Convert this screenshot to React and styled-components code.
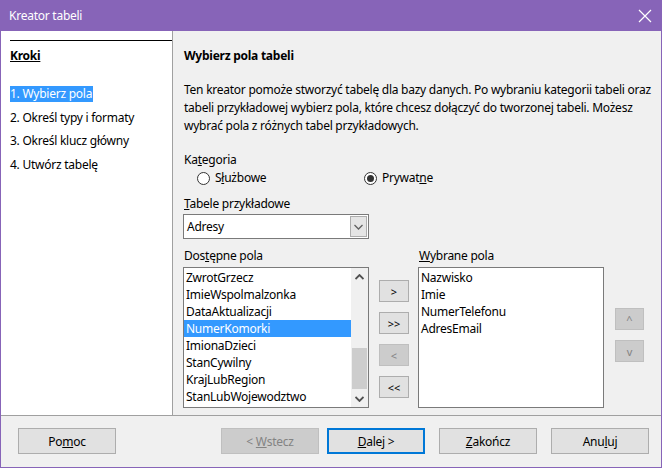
import styled, { createGlobalStyle } from "styled-components";

const GlobalStyle = createGlobalStyle`
    html, body {
        margin: 0;
        padding: 0;
        background: #ffffff;
    }
    * {
        box-sizing: border-box;
    }
`

const available = [
    "ZwrotGrzecz",
    "ImieWspolmalzonka",
    "DataAktualizacji",
    "NumerKomorki",
    "ImionaDzieci",
    "StanCywilny",
    "KrajLubRegion",
    "StanLubWojewodztwo",
];

const chosen = ["Nazwisko", "Imie", "NumerTelefonu", "AdresEmail"];

const steps = [
    "1. Wybierz pola",
    "2. Określ typy i formaty",
    "3. Określ klucz główny",
    "4. Utwórz tabelę",
];

function Chevron({ up, color = "#606060", weight = 1.3 }) {
    return (
        <svg width="9" height="6" viewBox="0 0 9 6">
            <path
                d={up ? "M0.5 5 L4.5 1 L8.5 5" : "M0.5 1 L4.5 5 L8.5 1"}
                fill="none"
                stroke={color}
                strokeWidth={weight}
            />
        </svg>
    );
}

function App() {
    return (
        <>
            <GlobalStyle />
            <Window>
                <TitleBar>
                    <Title>Kreator tabeli</Title>
                    <svg width="14" height="14" viewBox="0 0 14 14">
                        <path d="M1 1 L13 13 M13 1 L1 13" stroke="#ffffff" strokeWidth="1.2" />
                    </svg>
                </TitleBar>
                <Body>
                    <Sidebar>
                        <StepsHeader>Kroki</StepsHeader>
                        <StepList>
                            {steps.map((s, i) => (
                                <Step key={s} $active={i === 0}>{s}</Step>
                            ))}
                        </StepList>
                    </Sidebar>
                    <Main>
                        <Heading>Wybierz pola tabeli</Heading>
                        <Intro>
                            Ten kreator pomoże stworzyć tabelę dla bazy danych. Po wybraniu kategorii tabeli oraz<br />
                            tabeli przykładowej wybierz pola, które chcesz dołączyć do tworzonej tabeli. Możesz<br />
                            wybrać pola z różnych tabel przykładowych.
                        </Intro>
                        <Label>Ka<u>t</u>egoria</Label>
                        <RadioRow>
                            <RadioOption $width="167px">
                                <RadioCircle />
                                <span>S<u>ł</u>użbowe</span>
                            </RadioOption>
                            <RadioOption>
                                <RadioCircle $checked />
                                <span>Prywat<u>n</u>e</span>
                            </RadioOption>
                        </RadioRow>
                        <SampleLabel><u>T</u>abele przykładowe</SampleLabel>
                        <Dropdown>
                            <span>Adresy</span>
                            <DropButton>
                                <Chevron />
                            </DropButton>
                        </Dropdown>
                        <Lists>
                            <ListColumn>
                                <Label>Dos<u>t</u>ępne pola</Label>
                                <ListBox>
                                    <ListItems>
                                        {available.map((f) => (
                                            <ListItem key={f} $selected={f === "NumerKomorki"}>{f}</ListItem>
                                        ))}
                                    </ListItems>
                                    <ScrollBar>
                                        <ScrollArrow><Chevron up color="#505050" weight={1.8} /></ScrollArrow>
                                        <ScrollTrack>
                                            <ScrollThumb />
                                        </ScrollTrack>
                                        <ScrollArrow><Chevron color="#505050" weight={1.8} /></ScrollArrow>
                                    </ScrollBar>
                                </ListBox>
                            </ListColumn>
                            <MoveButtons>
                                <SmallButton>&gt;</SmallButton>
                                <SmallButton>&gt;&gt;</SmallButton>
                                <SmallButton disabled>&lt;</SmallButton>
                                <SmallButton>&lt;&lt;</SmallButton>
                            </MoveButtons>
                            <ListColumn>
                                <Label><u>W</u>ybrane pola</Label>
                                <ListBox>
                                    <ListItems>
                                        {chosen.map((f) => (
                                            <ListItem key={f}>{f}</ListItem>
                                        ))}
                                    </ListItems>
                                </ListBox>
                            </ListColumn>
                            <OrderButtons>
                                <SmallButton disabled $narrow>^</SmallButton>
                                <SmallButton disabled $narrow>v</SmallButton>
                            </OrderButtons>
                        </Lists>
                    </Main>
                </Body>
                <Footer>
                    <DialogButton>Po<u>m</u>oc</DialogButton>
                    <FooterRight>
                        <DialogButton disabled>&lt; <u>W</u>stecz</DialogButton>
                        <DialogButton $default><u>D</u>alej &gt;</DialogButton>
                        <DialogButton $spaced><u>Z</u>akończ</DialogButton>
                        <DialogButton $spaced>Anu<u>l</u>uj</DialogButton>
                    </FooterRight>
                </Footer>
            </Window>
        </>
    );
}

export default App;

const Window = styled.div`
    width: 662px;
    height: 468px;
    display: flex;
    flex-direction: column;
    border: 1px solid #8764b8;
    border-top: none;
    font-family: "Segoe UI", "Noto Sans", sans-serif;
    font-size: 12px;
    letter-spacing: -0.25px;
    color: #000000;
    background: #f0f0f0;
    overflow: hidden;
`
const TitleBar = styled.div`
    height: 31px;
    margin: 0 -1px;
    background: #8764b8;
    display: flex;
    align-items: center;
    justify-content: space-between;
    padding: 0 10px 0 9px;
    flex-shrink: 0;
`
const Title = styled.span`
    color: #ffffff;
    font-size: 12px;
`
const Body = styled.div`
    display: flex;
    flex: 1;
    min-height: 0;
`
const Sidebar = styled.div`
    width: 172px;
    background: #ffffff;
    border-right: 1px solid #a0a0a0;
    padding: 9px 0 0 9px;
    flex-shrink: 0;
`
const StepsHeader = styled.div`
    border-top: 1px solid #000000;
    padding-top: 7px;
    font-weight: bold;
    text-decoration: underline;
    line-height: 16px;
`
const StepList = styled.div`
    display: flex;
    flex-direction: column;
    align-items: flex-start;
    margin-top: 22px;
    gap: 7.6px;
`
const Step = styled.div`
    line-height: 16px;
    padding-right: 1px;
    background: ${(p) => (p.$active ? "#3399ff" : "transparent")};
    color: ${(p) => (p.$active ? "#ffffff" : "#000000")};
`
const Main = styled.div`
    flex: 1;
    padding: 0 10px;
    display: flex;
    flex-direction: column;
    align-items: flex-start;
`
const Heading = styled.div`
    margin-top: 17px;
    line-height: 16px;
    font-weight: bold;
    padding-left: 1px;
`
const Intro = styled.p`
    margin: 17px 0 0;
    line-height: 18px;
    padding-left: 1px;
    white-space: nowrap;
`
const Label = styled.div`
    line-height: 16px;
    margin-top: 17px;
    padding-left: 1px;
`
const SampleLabel = styled.div`
    line-height: 16px;
    margin-top: 10px;
    padding-left: 1px;
`
const RadioRow = styled.div`
    display: flex;
    margin-top: 2px;
    padding-left: 14px;
    line-height: 16px;
`
const RadioOption = styled.label`
    display: flex;
    align-items: center;
    gap: 5px;
    width: ${(p) => p.$width || "auto"};
`
const RadioCircle = styled.span`
    width: 13px;
    height: 13px;
    border-radius: 50%;
    border: 1px solid #333333;
    background: #ffffff;
    display: flex;
    align-items: center;
    justify-content: center;

    &::after {
        content: "";
        width: 7px;
        height: 7px;
        border-radius: 50%;
        background: ${(p) => (p.$checked ? "#333333" : "transparent")};
    }
`
const Dropdown = styled.div`
    margin-top: 2px;
    width: 186px;
    height: 25px;
    background: #ffffff;
    border: 1px solid #7a7a7a;
    display: flex;
    align-items: center;
    justify-content: space-between;
    padding: 0 1px 0 3px;
`
const DropButton = styled.div`
    width: 17px;
    height: 21px;
    background: #e5e5e5;
    border: 1px solid #adadad;
    display: flex;
    align-items: center;
    justify-content: center;
`
const Lists = styled.div`
    display: flex;
    margin-top: -8px;
`
const ListColumn = styled.div`
    display: flex;
    flex-direction: column;
    width: 186px;
`
const ListBox = styled.div`
    margin-top: 3px;
    height: 141px;
    background: #ffffff;
    border: 1px solid #7a7a7a;
    display: flex;
`
const ListItems = styled.div`
    flex: 1;
    padding-top: 1px;
    display: flex;
    flex-direction: column;
`
const ListItem = styled.div`
    height: 17px;
    line-height: 17px;
    padding-left: 2px;
    background: ${(p) => (p.$selected ? "#3399ff" : "transparent")};
    color: ${(p) => (p.$selected ? "#ffffff" : "#000000")};
`
const ScrollBar = styled.div`
    width: 17px;
    background: #f0f0f0;
    display: flex;
    flex-direction: column;
`
const ScrollArrow = styled.div`
    height: 17px;
    display: flex;
    align-items: center;
    justify-content: center;
`
const ScrollTrack = styled.div`
    flex: 1;
    display: flex;
    flex-direction: column;
    justify-content: flex-end;
`
const ScrollThumb = styled.div`
    height: 41px;
    margin: 0 1px 1px;
    background: #cdcdcd;
`
const MoveButtons = styled.div`
    display: flex;
    flex-direction: column;
    gap: 10px;
    margin: 49px 9px 0 10px;
`
const OrderButtons = styled.div`
    display: flex;
    flex-direction: column;
    gap: 10px;
    margin: 77px 0 0 11px;
`
const SmallButton = styled.button`
    width: ${(p) => (p.$narrow ? "29px" : "30px")};
    height: 22px;
    padding: 0;
    font-family: inherit;
    font-size: 11px;
    background: ${(p) => (p.disabled ? "#cccccc" : "#e1e1e1")};
    border: 1px solid ${(p) => (p.disabled ? "#bfbfbf" : "#adadad")};
    color: ${(p) => (p.disabled ? "#838383" : "#000000")};
`
const Footer = styled.div`
    height: 52px;
    border-top: 1px solid #a0a0a0;
    display: flex;
    align-items: flex-start;
    justify-content: space-between;
    padding: 12px 12px 0 17px;
    flex-shrink: 0;
`
const FooterRight = styled.div`
    display: flex;
    gap: 8px;
`
const DialogButton = styled.button`
    width: 98px;
    height: 26px;
    padding: 0;
    margin-left: ${(p) => (p.$spaced ? "6px" : "0")};
    font-family: inherit;
    font-size: 12px;
    letter-spacing: -0.25px;
    background: ${(p) => (p.disabled ? "#cccccc" : "#e1e1e1")};
    border: ${(p) => (p.$default ? "2px solid #0078d7" : p.disabled ? "1px solid #bfbfbf" : "1px solid #adadad")};
    color: ${(p) => (p.disabled ? "#838383" : "#000000")};
`
